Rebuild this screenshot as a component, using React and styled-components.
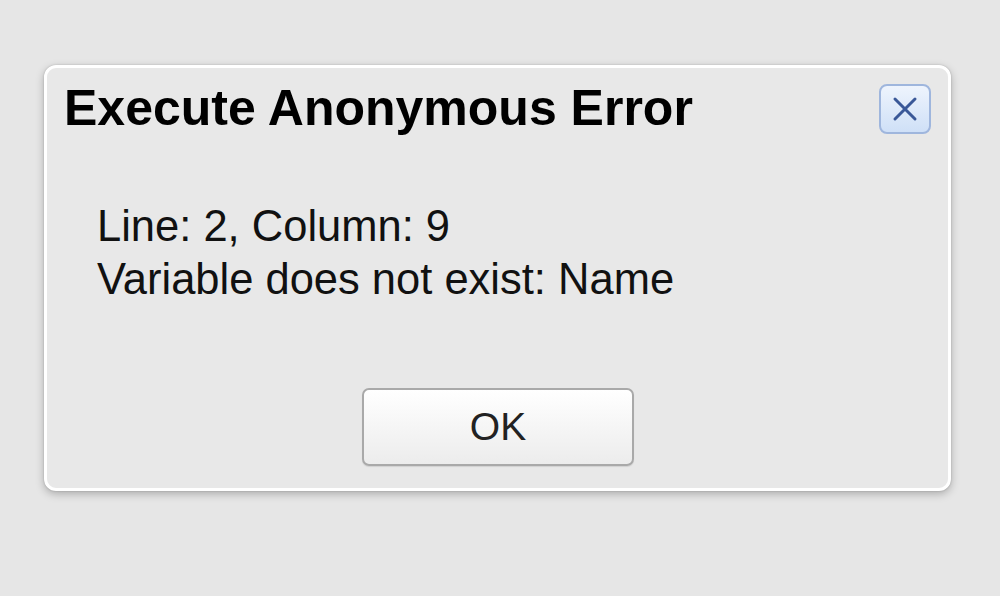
import styled, { createGlobalStyle } from "styled-components";

const GlobalStyle = createGlobalStyle`
    html, body {
        margin: 0;
        padding: 0;
        background: #e6e6e6;
        font-family: "Liberation Sans", Arial, sans-serif;
    }
`;

const Page = styled.div`
    width: 1000px;
    height: 596px;
    padding: 65px 0 0 44px;
    box-sizing: border-box;
`;

const Dialog = styled.div`
    width: 907px;
    height: 426px;
    box-sizing: border-box;
    background: #e8e8e8;
    border: 3px solid #ffffff;
    border-radius: 12px;
    box-shadow: 0 3px 8px rgba(0, 0, 0, 0.25), 0 0 2px rgba(0, 0, 0, 0.2);
    display: flex;
    flex-direction: column;
    padding: 12px 17px 22px 17px;
`;

const Header = styled.div`
    display: flex;
    justify-content: space-between;
    align-items: flex-start;
`;

const Title = styled.h1`
    margin: 0;
    font-size: 50px;
    font-weight: 700;
    color: #000;
    line-height: 56px;
    white-space: nowrap;
`;

const CloseButton = styled.button`
    width: 52px;
    height: 50px;
    margin-top: 4px;
    border: 2px solid #9fb6dd;
    border-radius: 8px;
    background: linear-gradient(#eef4fd, #cfe0f7);
    display: flex;
    align-items: center;
    justify-content: center;
    padding: 0;
    flex-shrink: 0;
`;

const Message = styled.div`
    margin: 64px 0 0 33px;
    font-size: 43.5px;
    line-height: 53px;
    color: #111;
`;

const Footer = styled.div`
    margin-top: auto;
    display: flex;
    justify-content: center;
`;

const OkButton = styled.button`
    width: 272px;
    height: 78px;
    margin-left: 1px;
    border: 2px solid #a9a9a9;
    border-radius: 7px;
    background: linear-gradient(#ffffff, #ececec);
    font-family: "Liberation Sans", Arial, sans-serif;
    font-size: 39px;
    color: #222;
    box-shadow: 0 1px 1px rgba(0, 0, 0, 0.1);
`;

function App() {
    return (
        <>
            <GlobalStyle />
            <Page>
                <Dialog>
                    <Header>
                        <Title>Execute Anonymous Error</Title>
                        <CloseButton aria-label="Close">
                            <svg width="30" height="30" viewBox="0 0 30 30">
                                <path
                                    d="M5 5 L25 25 M25 5 L5 25"
                                    stroke="#3a5898"
                                    strokeWidth="3"
                                    strokeLinecap="round"
                                />
                            </svg>
                        </CloseButton>
                    </Header>
                    <Message>
                        <div>Line: 2, Column: 9</div>
                        <div>Variable does not exist: Name</div>
                    </Message>
                    <Footer>
                        <OkButton>OK</OkButton>
                    </Footer>
                </Dialog>
            </Page>
        </>
    );
}

export default App;
